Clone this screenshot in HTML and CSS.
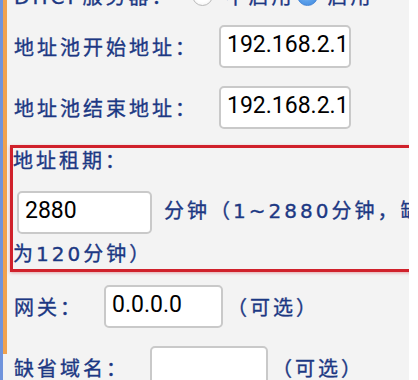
FILE: index.html
```html
<!DOCTYPE html>
<html lang="zh-CN">
<head>
<meta charset="utf-8">
<title>DHCP</title>
<link rel="stylesheet" href="styles.css">
</head>
<body>
<div class="page">
  <div class="frame">
    <div class="content">
      <div class="row row-dhcp">
        <span class="label">DHCP服务器：</span>
        <span class="radio"></span><span class="opt">不启用</span>
        <span class="radio checked"></span><span class="opt opt-on">启用</span>
      </div>
      <div class="row">
        <span class="label">地址池开始地址：</span>
        <input class="field ip" type="text" value="192.168.2.100">
      </div>
      <div class="row">
        <span class="label">地址池结束地址：</span>
        <input class="field ip" type="text" value="192.168.2.199">
      </div>
      <div class="lease">
        <div class="lease-label">地址租期：</div>
        <div class="lease-line"><input class="field lease-input" type="text" value="2880"><span class="unit">分钟（1~2880分钟，缺省为120分钟）</span></div>
      </div>
      <div class="row row-gw">
        <span class="label">网关：</span>
        <input class="field gw" type="text" value="0.0.0.0">
        <span class="hint">（可选）</span>
      </div>
      <div class="row">
        <span class="label">缺省域名：</span>
        <input class="field dn" type="text" value="">
        <span class="hint">（可选）</span>
      </div>
    </div>
  </div>
</div>
</body>
</html>
```
FILE: styles.css
```css
html, body {
  margin: 0;
  padding: 0;
  background: #ffffff;
}

.page {
  width: 409px;
  height: 380px;
  overflow: hidden;
  background: #f3f3f3;
  border-left: 3px solid #6f93dc;
  box-sizing: border-box;
}

.frame {
  height: 100%;
  border-left: 4px solid #f0a24f;
  padding-left: 7px;
}

.content {
  width: 447px;
  font-family: "DejaVu Sans", "Noto Sans CJK JP", sans-serif;
  font-size: 20px;
  letter-spacing: 3px;
  color: #1c3883;
  -webkit-text-stroke: 0.35px #1c3883;
}

.row {
  display: flex;
  align-items: center;
  height: 61px;
}

.row-dhcp {
  height: 42px;
  margin-top: -26px;
}

.label {
  white-space: nowrap;
}

.radio {
  flex: none;
  width: 21px;
  height: 21px;
  box-sizing: border-box;
  border-radius: 50%;
  border: 1px solid #b9b9b9;
  background: radial-gradient(circle at 50% 40%, #ffffff 55%, #ececec 100%);
  margin-left: 18px;
}

.radio.checked {
  margin-left: 3px;
  border-color: #4585d6;
  background: radial-gradient(circle at 45% 35%, #9cc8f5 0%, #5a9fea 55%, #3d86dc 100%);
}

.opt {
  margin-left: 12px;
  white-space: nowrap;
}

.opt-on {
  margin-left: 9px;
}

.field {
  box-sizing: border-box;
  height: 43px;
  margin: 0 0 0 21px;
  padding: 0 1px 4px 6px;
  border: 2px solid #c9c9c9;
  border-radius: 5px;
  background: #ffffff;
  font-family: Roboto, "Liberation Sans", sans-serif;
  font-size: 23px;
  letter-spacing: 0;
  color: #000000;
  -webkit-text-stroke: 0;
  outline: none;
  flex: none;
}

.ip {
  width: 132px;
}

.gw {
  width: 119px;
}

.dn {
  width: 118px;
}

.hint {
  margin-left: 4px;
  white-space: nowrap;
}

.lease {
  margin-top: 7px;
  margin-left: -4px;
  height: 121px;
  border: 3px solid #d0212b;
  box-shadow: 0 1px 3px rgba(200, 30, 40, 0.35);
}

.lease-label {
  line-height: 27px;
}

.lease-line {
  margin-top: 16px;
  line-height: 40px;
}

.lease-input {
  width: 135px;
  margin-left: 4px;
  vertical-align: middle;
}

.unit {
  margin-left: 12px;
}

.row-gw {
  margin-top: 4px;
}
```
